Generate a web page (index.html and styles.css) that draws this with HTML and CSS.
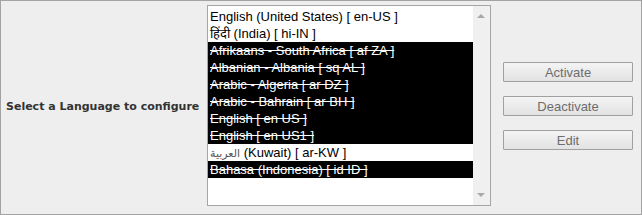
FILE: index.html
```html
<!DOCTYPE html>
<html lang="en">
<head>
  <meta charset="UTF-8" />
  <title>Language Configuration</title>
  <link rel="stylesheet" href="styles.css">
</head>
<body>

<div class="frame">
  <div class="label-cell">Select a Language to configure</div>

  <div class="listbox" role="listbox" aria-label="Languages">
    <ul class="options">
      <li class="opt">English (United States) [ en-US ]</li>
      <li class="opt">हिंदी (India) [ hi-IN ]</li>
      <li class="opt off">Afrikaans - South Africa [ af ZA ]</li>
      <li class="opt off">Albanian - Albania [ sq AL ]</li>
      <li class="opt off">Arabic - Algeria [ ar DZ ]</li>
      <li class="opt off">Arabic - Bahrain [ ar BH ]</li>
      <li class="opt off">English [ en US ]</li>
      <li class="opt off">English [ en US1 ]</li>
      <li class="opt"><span class="arabic">العربية</span> (Kuwait) [ ar-KW ]</li>
      <li class="opt off">Bahasa (Indonesia) [ id ID ]</li>
    </ul>
    <div class="scrollbar">
      <span class="arrow up"></span>
      <span class="arrow down"></span>
    </div>
  </div>

  <div class="actions">
    <button disabled>Activate</button>
    <button disabled>Deactivate</button>
    <button disabled>Edit</button>
  </div>
</div>

</body>
</html>
```

FILE: styles.css
```css
* {
  box-sizing: border-box;
}
body {
  margin: 0;
  font-family: 'Liberation Sans', Arial, sans-serif;
  background: #eeeeee;
}
.frame {
  width: 642px;
  height: 215px;
  border: 1px solid #a3a3a3;
  background: #eeeeee;
  display: flex;
  align-items: flex-start;
}
.label-cell {
  width: 206px;
  padding-left: 5px;
  margin-top: 99px;
  font-family: 'DejaVu Sans', Tahoma, sans-serif;
  font-weight: bold;
  font-size: 11px;
  line-height: 14px;
  color: #333;
  white-space: nowrap;
}

.listbox {
  margin-top: 4px;
  width: 284px;
  height: 201px;
  border: 1px solid #a5a5a5;
  background: #fff;
  display: flex;
}
.options {
  flex: 1;
  list-style: none;
  margin: 0;
  padding: 2px 0 0 0;
}
.opt {
  height: 17px;
  line-height: 17px;
  padding-left: 2px;
  font-size: 13px;
  color: #000;
  white-space: nowrap;
}
.opt.off {
  background: #000;
  color: #fff;
  text-decoration: line-through;
}
.arabic {
  font-family: 'DejaVu Sans', sans-serif;
  font-size: 11px;
  color: #555;
}

.scrollbar {
  width: 17px;
  background: #f0f0f0;
  position: relative;
}
.arrow {
  position: absolute;
  left: 4px;
  width: 0;
  height: 0;
  border-left: 4px solid transparent;
  border-right: 4px solid transparent;
}
.arrow.up {
  top: 8px;
  border-bottom: 4px solid #a8a8a8;
}
.arrow.down {
  bottom: 8px;
  border-top: 4px solid #a8a8a8;
}

.actions {
  margin-top: 61px;
  margin-left: 12px;
  display: flex;
  flex-direction: column;
  gap: 14px;
}
.actions button {
  width: 130px;
  height: 20px;
  padding: 0;
  border: 1px solid #a0a0a0;
  border-radius: 1px;
  background: linear-gradient(#f4f4f4, #e2e2e2);
  font-family: 'Liberation Sans', Arial, sans-serif;
  font-size: 13px;
  color: #6d6d6d;
}
```
